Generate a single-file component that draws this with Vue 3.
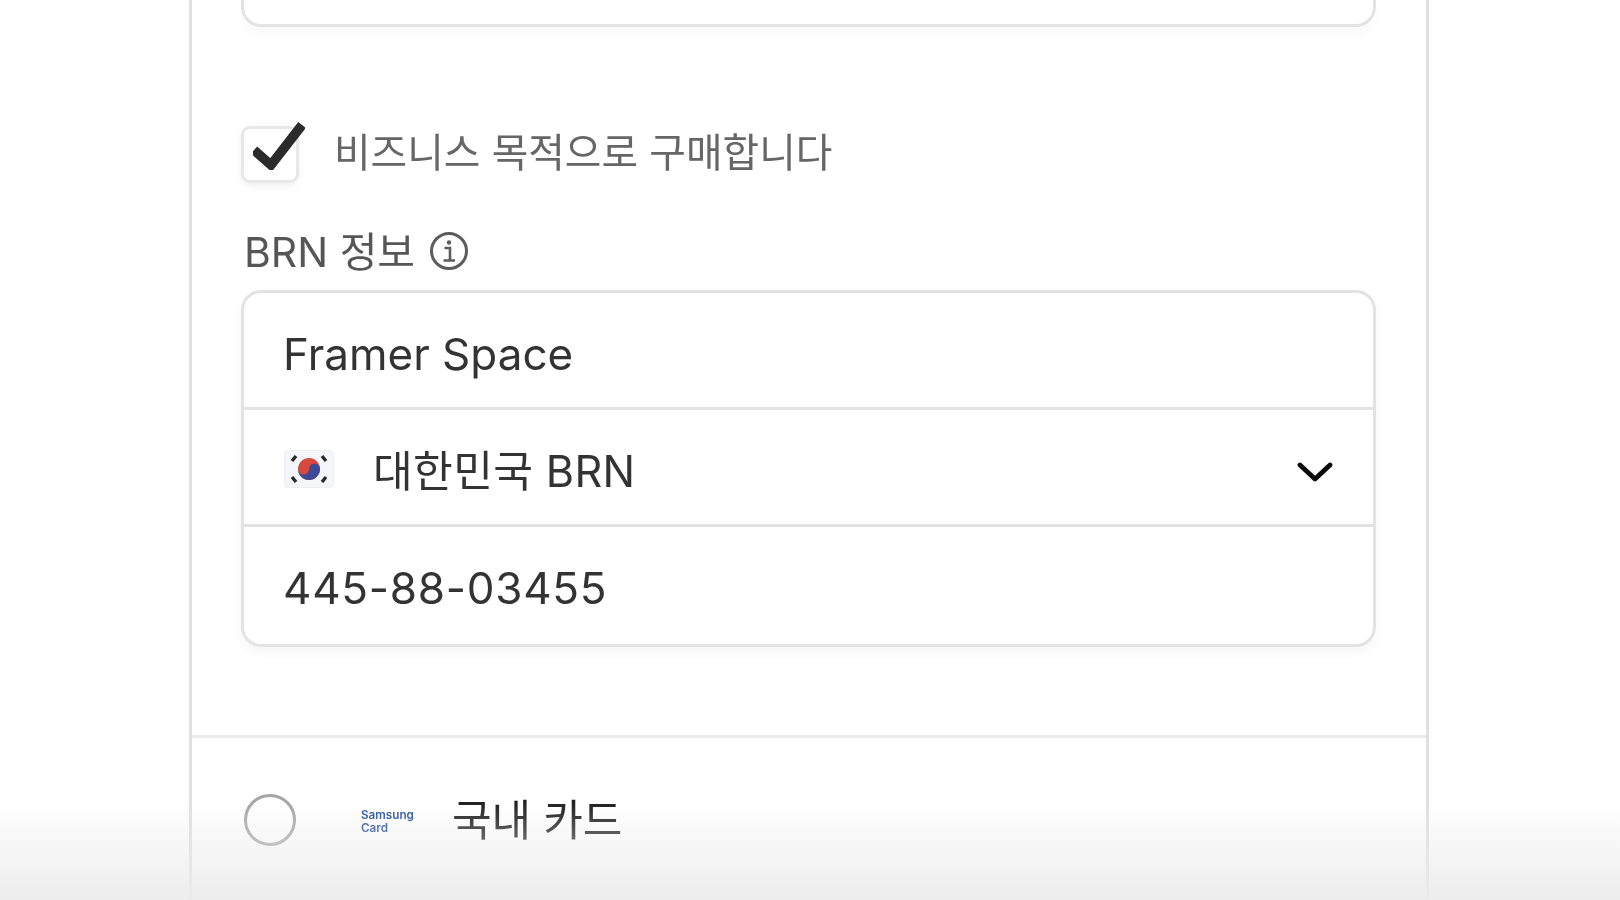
<script setup>
const rows = [
  { id: 'name', text: 'Framer Space' },
  { id: 'country', text: '대한민국 BRN', flag: true },
  { id: 'number', text: '445-88-03455' },
]
</script>

<template>
  <div class="page">
    <main class="panel">
      <div class="form">
        <div class="clipped-input"></div>
        <label class="business">
          <span class="checkbox">
            <svg class="check" viewBox="0 0 52 48" width="52" height="48">
              <path d="M1 28 L18 43 L49 3" fill="none" stroke="#2b2b2b" stroke-width="9.5" />
            </svg>
          </span>
          <span class="business-text">비즈니스 목적으로 구매합니다</span>
        </label>
        <div class="section-label">
          <span>BRN 정보</span>
          <svg viewBox="0 0 40 40" width="40" height="40" class="info">
            <circle cx="20" cy="20" r="17.5" fill="none" stroke="#5c5c5c" stroke-width="3" />
            <circle cx="20" cy="11.5" r="2.2" fill="#5c5c5c" />
            <path d="M15.5 17 H21 V29 M14.5 29.5 H26" fill="none" stroke="#5c5c5c" stroke-width="2.6" />
          </svg>
        </div>
        <div class="group">
          <div v-for="row in rows" :key="row.id" class="row" :class="'row-' + row.id">
            <span v-if="row.flag" class="flag">
              <svg viewBox="0 0 50 38" width="50" height="38">
                <rect x="0.5" y="0.5" width="49" height="37" rx="4" fill="#f5f6fa" stroke="#eceef3" />
                <circle cx="25" cy="19" r="11" fill="#d9483f" />
                <path d="M14 19 A11 11 0 0 0 36 19 A5.5 5.5 0 0 0 25 19 A5.5 5.5 0 0 1 14 19 Z" fill="#3f4a96" />
                <path d="M8 11 L12 6 M38 6 L42 11 M8 27 L12 32 M42 27 L38 32" stroke="#2a2a2a" stroke-width="3.4" fill="none" />
              </svg>
            </span>
            <span class="row-text">{{ row.text }}</span>
            <svg v-if="row.flag" class="chevron" viewBox="0 0 36 22" width="36" height="22">
              <path d="M3 4 L18 18 L33 4" fill="none" stroke="#0c0c0c" stroke-width="4.8" stroke-linecap="round" stroke-linejoin="round" />
            </svg>
          </div>
        </div>
      </div>
      <div class="method">
        <span class="radio"></span>
        <span class="samsung">Samsung<br />Card</span>
        <span class="method-text">국내 카드</span>
      </div>
    </main>
    <div class="fade"></div>
  </div>
</template>

<style scoped>
.page {
  position: relative;
  width: 1620px;
  height: 900px;
  overflow: hidden;
  background: #fff;
  font-family: Inter, "Noto Sans CJK KR", sans-serif;
}
.panel {
  width: 1240px;
  height: 900px;
  margin-left: 189px;
  box-sizing: border-box;
  border-left: 3px solid #e0e0e0;
  border-right: 3px solid #e0e0e0;
  filter: blur(0.5px);
}
.form {
  padding: 0 50px 0 49px;
}
.clipped-input {
  height: 27px;
  box-sizing: border-box;
  border: 3px solid #e3e3e3;
  border-top: none;
  border-radius: 0 0 20px 20px;
  box-shadow: 0 8px 8px rgba(0, 0, 0, 0.025);
}
.business {
  display: flex;
  align-items: center;
  gap: 35px;
  margin-top: 99px;
  height: 57px;
}
.checkbox {
  position: relative;
  width: 58px;
  height: 57px;
  box-sizing: border-box;
  border: 3px solid #e8e8e8;
  border-radius: 9px;
  box-shadow: 0 3px 6px rgba(0, 0, 0, 0.06);
  flex: none;
}
.check {
  position: absolute;
  left: 9px;
  top: -7px;
}
.business-text {
  font-size: 39.8px;
  line-height: 57px;
  color: #666;
  font-weight: 400;
  position: relative;
  top: -2px;
}
.section-label {
  display: flex;
  align-items: center;
  gap: 14px;
  margin: 40px 0 0 3px;
  height: 52px;
  font-size: 41px;
  font-weight: 400;
  color: #565656;
}
.info {
  flex: none;
  position: relative;
  top: 2px;
}
.group {
  margin-top: 15px;
  box-sizing: border-box;
  height: 357px;
  border: 3px solid #e3e3e3;
  border-radius: 20px;
  box-shadow: 0 5px 12px rgba(0, 0, 0, 0.04);
  display: flex;
  flex-direction: column;
}
.row {
  box-sizing: border-box;
  display: flex;
  align-items: center;
  padding: 8px 41px 0 39px;
  font-size: 44px;
  color: #333;
}
.row-name {
  height: 114px;
}
.row-country {
  height: 117px;
}
.row-country .row-text {
  position: relative;
  top: -3px;
  font-size: 43.2px;
  letter-spacing: 0.35px;
}
.row-number {
  height: 120px;
  padding-top: 5px;
  letter-spacing: 0.75px;
}
.row + .row {
  border-top: 3px solid #e3e3e3;
}
.flag {
  display: flex;
  flex: none;
  margin: 0 39px 4px 1px;
}
.row-text {
  flex: 1;
}
.chevron {
  flex: none;
  position: relative;
  left: 1px;
  top: 1px;
}
.method {
  margin-top: 88px;
  border-top: 3px solid #eaeaea;
  height: 163px;
  display: flex;
  align-items: flex-start;
  padding: 56px 0 0 52px;
}
.radio {
  width: 52px;
  height: 52px;
  box-sizing: border-box;
  border: 3px solid #a5a5a5;
  border-radius: 50%;
  flex: none;
}
.samsung {
  margin: 15px 0 0 65px;
  font-size: 11.7px;
  line-height: 13px;
  font-weight: 600;
  color: #1d4c9e;
  width: 53px;
  flex: none;
}
.method-text {
  margin: 0 0 0 38px;
  font-size: 43px;
  line-height: 52px;
  color: #1c1c1c;
}
.fade {
  position: absolute;
  left: 0;
  right: 0;
  bottom: 0;
  height: 100px;
  pointer-events: none;
  background: linear-gradient(to bottom, rgba(235, 235, 235, 0), rgba(235, 235, 235, 0.9));
}
</style>
